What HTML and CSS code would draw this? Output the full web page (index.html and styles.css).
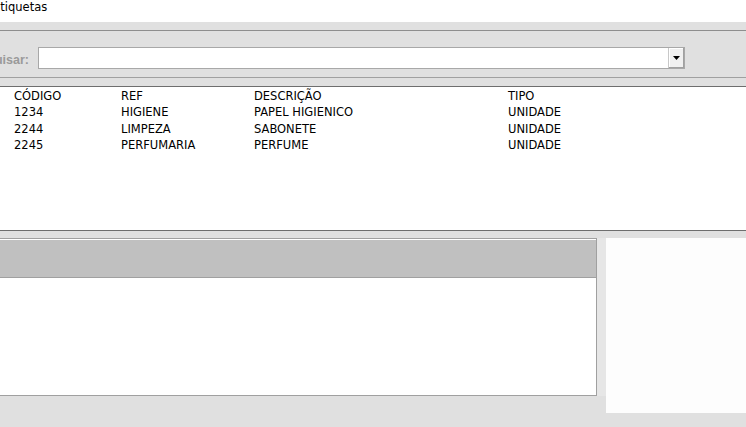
FILE: index.html
```html
<!DOCTYPE html>
<html>
<head>
<meta charset="utf-8">
<link rel="stylesheet" href="styles.css">
</head>
<body>
<div class="titlebar"><span class="title">Etiquetas</span></div>
<div class="search-section">
  <div class="search-row">
    <div class="search-label"><span>Pesquisar:</span></div>
    <div class="combo">
      <div class="combo-field"></div>
      <div class="combo-btn">
        <svg width="7" height="4" viewBox="0 0 7 4"><path d="M0 0H7L3.5 4Z" fill="#000"/></svg>
      </div>
    </div>
  </div>
</div>
<div class="spacer"></div>
<div class="grid">
  <div class="grid-row">
    <span class="c1">CÓDIGO</span><span class="c2">REF</span><span class="c3">DESCRIÇÃO</span><span class="c4">TIPO</span>
  </div>
  <div class="grid-row">
    <span class="c1">1234</span><span class="c2">HIGIENE</span><span class="c3">PAPEL HIGIENICO</span><span class="c4">UNIDADE</span>
  </div>
  <div class="grid-row">
    <span class="c1">2244</span><span class="c2">LIMPEZA</span><span class="c3">SABONETE</span><span class="c4">UNIDADE</span>
  </div>
  <div class="grid-row">
    <span class="c1">2245</span><span class="c2">PERFUMARIA</span><span class="c3">PERFUME</span><span class="c4">UNIDADE</span>
  </div>
</div>
<div class="lower">
  <div class="detail-box">
    <div class="detail-header"></div>
    <div class="detail-body"></div>
  </div>
  <div class="divider-strip"></div>
  <div class="side-panel"></div>
</div>
</body>
</html>
```

FILE: styles.css
```css
html, body {
  margin: 0;
  padding: 0;
}
body {
  width: 746px;
  height: 427px;
  overflow: hidden;
  background: #e0e0e0;
  font-family: "DejaVu Sans", Verdana, sans-serif;
  font-size: 11.5px;
  color: #000;
}
.titlebar {
  height: 22px;
  background: #fff;
  overflow: hidden;
}
.title {
  display: block;
  margin-left: -7px;
  line-height: 14px;
  font-size: 11.5px;
}
.search-section {
  margin-top: 8px;
  border-top: 1px solid #8e8e8e;
  border-bottom: 1px solid #a0a0a0;
  height: 46px;
}
.search-row {
  display: flex;
  align-items: center;
  padding-top: 16px;
  height: 22px;
}
.search-label {
  display: flex;
  justify-content: flex-end;
  width: 29px;
  overflow: hidden;
  margin-right: 9px;
  flex-shrink: 0;
  padding-top: 4px;
}
.search-label span {
  flex-shrink: 0;
  white-space: nowrap;
  color: #9a9a9a;
  font-family: "Liberation Sans", Arial, sans-serif;
  font-weight: bold;
  font-size: 12.5px;
}
.combo {
  display: flex;
  width: 647px;
  height: 22px;
  box-sizing: border-box;
  border: 1px solid #a8a8a8;
  background: #fff;
}
.combo-field {
  flex: 1;
}
.combo-btn {
  width: 16px;
  box-sizing: border-box;
  border-left: 1px solid #c8c8c8;
  background: #f0f0f0;
  box-shadow: inset -1px -1px 0 #a0a0a0, inset 1px 1px 0 #fff;
  display: flex;
  align-items: center;
  justify-content: center;
}
.spacer {
  height: 8px;
}
.grid {
  border-top: 1px solid #6e6e6e;
  border-bottom: 1px solid #6e6e6e;
  background: #fff;
  padding-top: 1px;
  box-sizing: border-box;
  height: 145px;
}
.grid-row {
  display: flex;
  height: 16.33px;
  line-height: 16px;
  white-space: nowrap;
}
.grid-row span {
  display: block;
}
.c1 { margin-left: 14px; width: 107px; }
.c2 { width: 133px; }
.c3 { width: 254px; }
.lower {
  display: flex;
  margin-top: 7px;
}
.detail-box {
  width: 597px;
  height: 158px;
  box-sizing: border-box;
  border: 1px solid #a0a0a0;
  border-left: none;
  background: #fff;
  display: flex;
  flex-direction: column;
}
.detail-header {
  height: 37px;
  margin-top: 1px;
  background: #c0c0c0;
  border-bottom: 1px solid #a0a0a0;
}
.detail-body {
  flex: 1;
}
.divider-strip {
  width: 9px;
  height: 158px;
  background: #e6e6e6;
}
.side-panel {
  width: 140px;
  height: 175px;
  background: #fdfdfd;
}
```
